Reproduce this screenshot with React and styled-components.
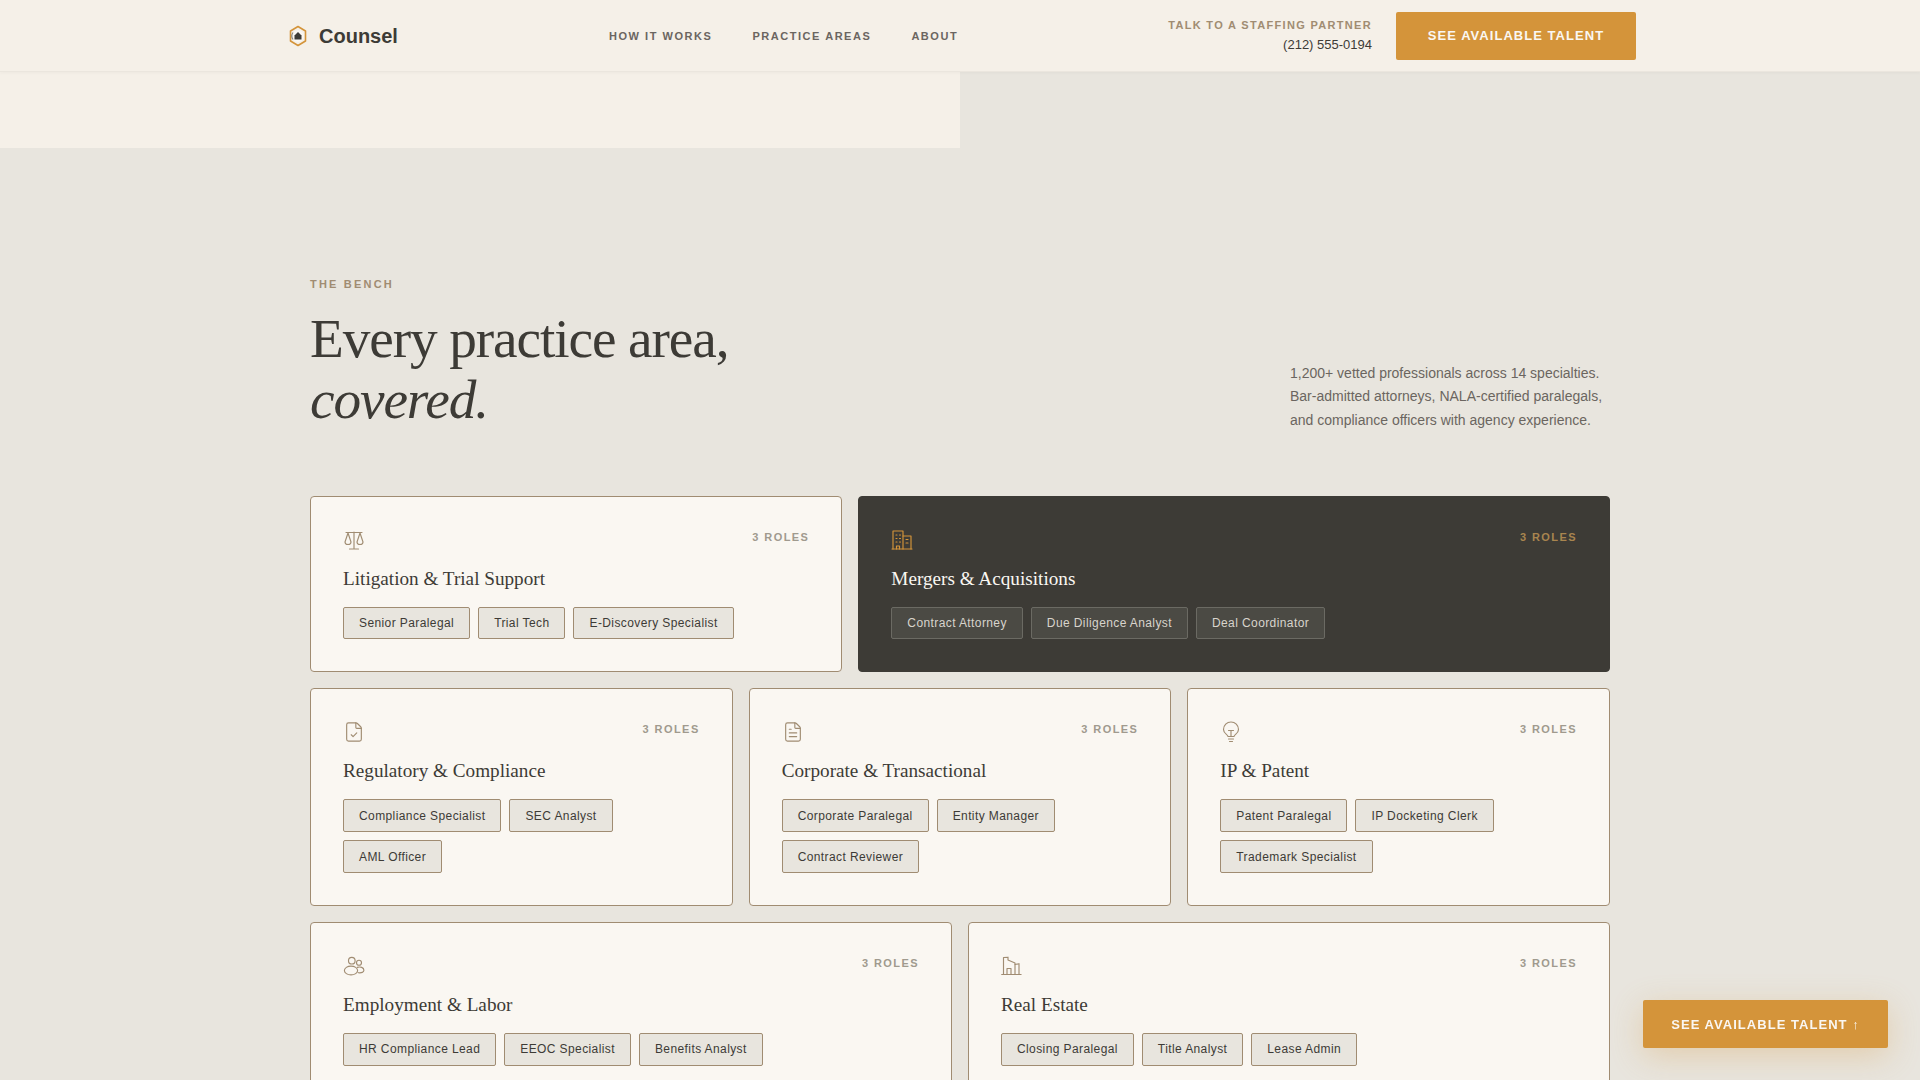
import React from "react";
import styled, { createGlobalStyle } from "styled-components";
import { FileCheck, FileText } from "lucide-react";

const Global = createGlobalStyle`
  html, body { margin: 0; padding: 0; background: #e8e5de; }
  html { overflow: hidden; }
  body { font-family: "Liberation Sans", Arial, sans-serif; color: #3d3b36; }
  * { box-sizing: border-box; }
`;

const Header = styled.header`
  height: 72px;
  background: #f5f0e8;
  border-bottom: 1px solid #ebe6de;
  box-shadow: 0 1px 3px rgba(61, 59, 54, 0.04);
  display: flex;
  justify-content: center;
  position: relative;
`;
const HeaderInner = styled.div`
  width: 1348px;
  margin-left: 4px;
  display: flex;
  align-items: center;
`;
const Logo = styled.div`
  display: flex;
  align-items: center;
  gap: 9px;
  margin-left: -2px;
  width: 323px;
`;
const LogoText = styled.span`
  font-size: 20px;
  font-weight: 600;
  color: #3d3b36;
  padding-top: 2px;
`;
const Nav = styled.nav`
  display: flex;
  gap: 40px;
`;
const NavLink = styled.a`
  font-size: 11px;
  font-weight: 600;
  letter-spacing: 0.14em;
  text-transform: uppercase;
  color: #6b6560;
`;
const HeaderRight = styled.div`
  margin-left: auto;
  display: flex;
  align-items: center;
  gap: 24px;
`;
const Contact = styled.div`
  text-align: right;
  display: flex;
  flex-direction: column;
  gap: 6px;
`;
const ContactLabel = styled.span`
  font-size: 11px;
  font-weight: 600;
  letter-spacing: 0.12em;
  text-transform: uppercase;
  color: #a08c72;
`;
const Phone = styled.span`
  font-size: 13px;
  color: #3d3b36;
`;
const Cta = styled.button`
  height: 48px;
  width: 240px;
  border: none;
  border-radius: 2px;
  background: #d4943a;
  color: #faf7f2;
  font-family: inherit;
  font-size: 13px;
  font-weight: 600;
  letter-spacing: 0.08em;
  text-transform: uppercase;
`;
const FloatCta = styled(Cta)`
  position: fixed;
  right: 32px;
  bottom: 32px;
  width: 245px;
  box-shadow: 0 8px 32px rgba(212, 148, 58, 0.3);
`;
const Band = styled.div`
  width: 50%;
  height: 76px;
  background: #f5f0e8;
`;
const Section = styled.section`
  width: 1300px;
  margin: 0 auto;
  padding-top: 130px;
`;
const Intro = styled.div`
  display: flex;
  justify-content: space-between;
  align-items: flex-end;
  margin-bottom: 64px;
`;
const Eyebrow = styled.div`
  font-size: 11px;
  font-weight: 600;
  letter-spacing: 0.2em;
  text-transform: uppercase;
  color: #a08c72;
  margin-bottom: 19px;
`;
const Title = styled.h2`
  margin: 0 0 1px;
  font-family: "Liberation Serif", "Times New Roman", serif;
  font-weight: 400;
  font-size: 55.3px;
  line-height: 1.1;
  letter-spacing: -0.02em;
  color: #3d3b36;
  em { font-style: italic; }
`;
const Lead = styled.p`
  margin: 0;
  width: 320px;
  font-size: 14px;
  line-height: 1.65;
  color: #6b6560;
`;
const Grid = styled.div`
  display: grid;
  grid-template-columns: repeat(12, 1fr);
  gap: 16px;
`;
const Card = styled.article`
  grid-column: span ${(p) => p.$span};
  padding: 32px;
  border-radius: 4px;
  border: 1px solid ${(p) => (p.$dark ? "#3d3b36" : "#a08c72")};
  background: ${(p) => (p.$dark ? "#3d3b36" : "#faf7f2")};
`;
const CardTop = styled.div`
  display: flex;
  justify-content: space-between;
  align-items: flex-start;
  height: 24px;
  margin-bottom: 14px;
`;
const IconWrap = styled.span`
  display: block;
  height: 22px;
  color: ${(p) => (p.$dark ? "#d4943a" : "#a08c72")};
`;
const Roles = styled.span`
  font-size: 11px;
  font-weight: 600;
  letter-spacing: 0.13em;
  padding-top: 2px;
  text-transform: uppercase;
  color: ${(p) => (p.$dark ? "#a9854f" : "#a09a8e")};
`;
const CardTitle = styled.h3`
  margin: 0 0 17px;
  font-family: "Liberation Serif", "Times New Roman", serif;
  font-weight: 400;
  font-size: 19.2px;
  line-height: 23px;
  color: ${(p) => (p.$dark ? "#faf7f2" : "#3d3b36")};
`;
const Tags = styled.div`
  display: flex;
  flex-wrap: wrap;
  gap: 8px;
`;
const Tag = styled.span`
  height: 32.8px;
  display: inline-flex;
  align-items: center;
  padding: 0 15px;
  font-size: 12px;
  letter-spacing: 0.4px;
  border-radius: 2px;
  border: 1px solid ${(p) => (p.$dark ? "#6b6a63" : "#a08c72")};
  background: ${(p) => (p.$dark ? "#4b4a44" : "#e8e5de")};
  color: ${(p) => (p.$dark ? "#d8d4cc" : "#3d3b36")};
`;

const LogoMark = () => (
  <svg width="24" height="24" viewBox="0 0 24 24" fill="none">
    <path d="M12 2.5 L19.5 7 V17 L12 21.5 L4.5 17 V7 Z" stroke="#d4943a" strokeWidth="1.6" strokeLinejoin="round" />
    <circle cx="12" cy="12" r="6" fill="#faf7f2" />
    <path d="M7 8.5a6 6 0 0 0 0 7" stroke="#8a8780" strokeWidth="1.2" />
    <path d="M12 8 L15.5 11.5 V15.5 H8.5 V11.5 Z" fill="#3d3b36" />
  </svg>
);

const Glyph = ({ children }) => (
  <svg width="22" height="22" viewBox="0 0 22 22" fill="none" stroke="currentColor" strokeWidth="1.15" strokeLinecap="round" strokeLinejoin="round">
    {children}
  </svg>
);

const ScaleIcon = () => (
  <Glyph>
    <path d="M11 3v17M6.5 20h9M3 3.5h16" />
    <path d="M5 4L2 13a3 2.5 0 0 0 6 0Z" />
    <path d="M17 4l-3 9a3 2.5 0 0 0 6 0Z" />
  </Glyph>
);
const BuildingIcon = () => (
  <Glyph>
    <path d="M1 20h20" />
    <path d="M2 20V2h10v18" />
    <path d="M12 7h8v13" />
    <path d="M5 6h1M8.5 6h1M5 9.5h1M8.5 9.5h1M5 13h1M8.5 13h1M15 10.5h2M15 14h2" />
    <path d="M5.5 20v-3h3v3" />
  </Glyph>
);
const BulbIcon = () => (
  <Glyph>
    <path d="M8 15.5C8 13.5 3.5 12.8 3.5 8.5a7.5 7.5 0 0 1 15 0c0 4.3-4.5 5-4.5 7Z" />
    <path d="M8.5 9.5h5M11 9.5v6" />
    <path d="M8.5 18h5M9.5 20.5h3" />
  </Glyph>
);
const UsersIcon = () => (
  <Glyph>
    <circle cx="8.8" cy="5.7" r="3.3" />
    <circle cx="16" cy="7.7" r="2.5" />
    <ellipse cx="8" cy="15.5" rx="6.6" ry="4.4" />
    <path d="M14.3 12.4c3-1 6.6 0 6.6 2.8 0 2-2.5 3-5.6 2.5" />
  </Glyph>
);
const EstateIcon = () => (
  <Glyph>
    <path d="M0.7 19.5h19.4" />
    <path d="M2.5 19.5V2.5L7 2.2V5l7 3v11.5" />
    <path d="M14 9.5l4-.8v10.8" />
    <path d="M6 19.5v-6h4v6" />
  </Glyph>
);
const lucide = (I) => () => <I size={22} strokeWidth={1.25} />;

const cards = [
  { span: 5, Icon: ScaleIcon, title: "Litigation & Trial Support", tags: ["Senior Paralegal", "Trial Tech", "E-Discovery Specialist"] },
  { span: 7, dark: true, Icon: BuildingIcon, title: "Mergers & Acquisitions", tags: ["Contract Attorney", "Due Diligence Analyst", "Deal Coordinator"] },
  { span: 4, Icon: lucide(FileCheck), title: "Regulatory & Compliance", tags: ["Compliance Specialist", "SEC Analyst", "AML Officer"] },
  { span: 4, Icon: lucide(FileText), title: "Corporate & Transactional", tags: ["Corporate Paralegal", "Entity Manager", "Contract Reviewer"] },
  { span: 4, Icon: BulbIcon, title: "IP & Patent", tags: ["Patent Paralegal", "IP Docketing Clerk", "Trademark Specialist"] },
  { span: 6, Icon: UsersIcon, title: "Employment & Labor", tags: ["HR Compliance Lead", "EEOC Specialist", "Benefits Analyst"] },
  { span: 6, Icon: EstateIcon, title: "Real Estate", tags: ["Closing Paralegal", "Title Analyst", "Lease Admin"] },
];

export default function App() {
  return (
    <>
      <Global />
      <Header>
        <HeaderInner>
          <Logo>
            <LogoMark />
            <LogoText>Counsel</LogoText>
          </Logo>
          <Nav>
            <NavLink>How it works</NavLink>
            <NavLink>Practice areas</NavLink>
            <NavLink>About</NavLink>
          </Nav>
          <HeaderRight>
            <Contact>
              <ContactLabel>Talk to a staffing partner</ContactLabel>
              <Phone>(212) 555-0194</Phone>
            </Contact>
            <Cta>See available talent</Cta>
          </HeaderRight>
        </HeaderInner>
      </Header>
      <Band />
      <Section>
        <Intro>
          <div>
            <Eyebrow>The bench</Eyebrow>
            <Title>
              Every practice area,
              <br />
              <em>covered.</em>
            </Title>
          </div>
          <Lead>
            1,200+ vetted professionals across 14 specialties. Bar-admitted attorneys, NALA-certified paralegals, and compliance officers with agency experience.
          </Lead>
        </Intro>
        <Grid>
          {cards.map((c) => (
            <Card key={c.title} $span={c.span} $dark={c.dark}>
              <CardTop>
                <IconWrap $dark={c.dark}>
                  <c.Icon />
                </IconWrap>
                <Roles $dark={c.dark}>3 roles</Roles>
              </CardTop>
              <CardTitle $dark={c.dark}>{c.title}</CardTitle>
              <Tags>
                {c.tags.map((t) => (
                  <Tag key={t} $dark={c.dark}>{t}</Tag>
                ))}
              </Tags>
            </Card>
          ))}
        </Grid>
      </Section>
      <FloatCta>See available talent ↑</FloatCta>
    </>
  );
}
